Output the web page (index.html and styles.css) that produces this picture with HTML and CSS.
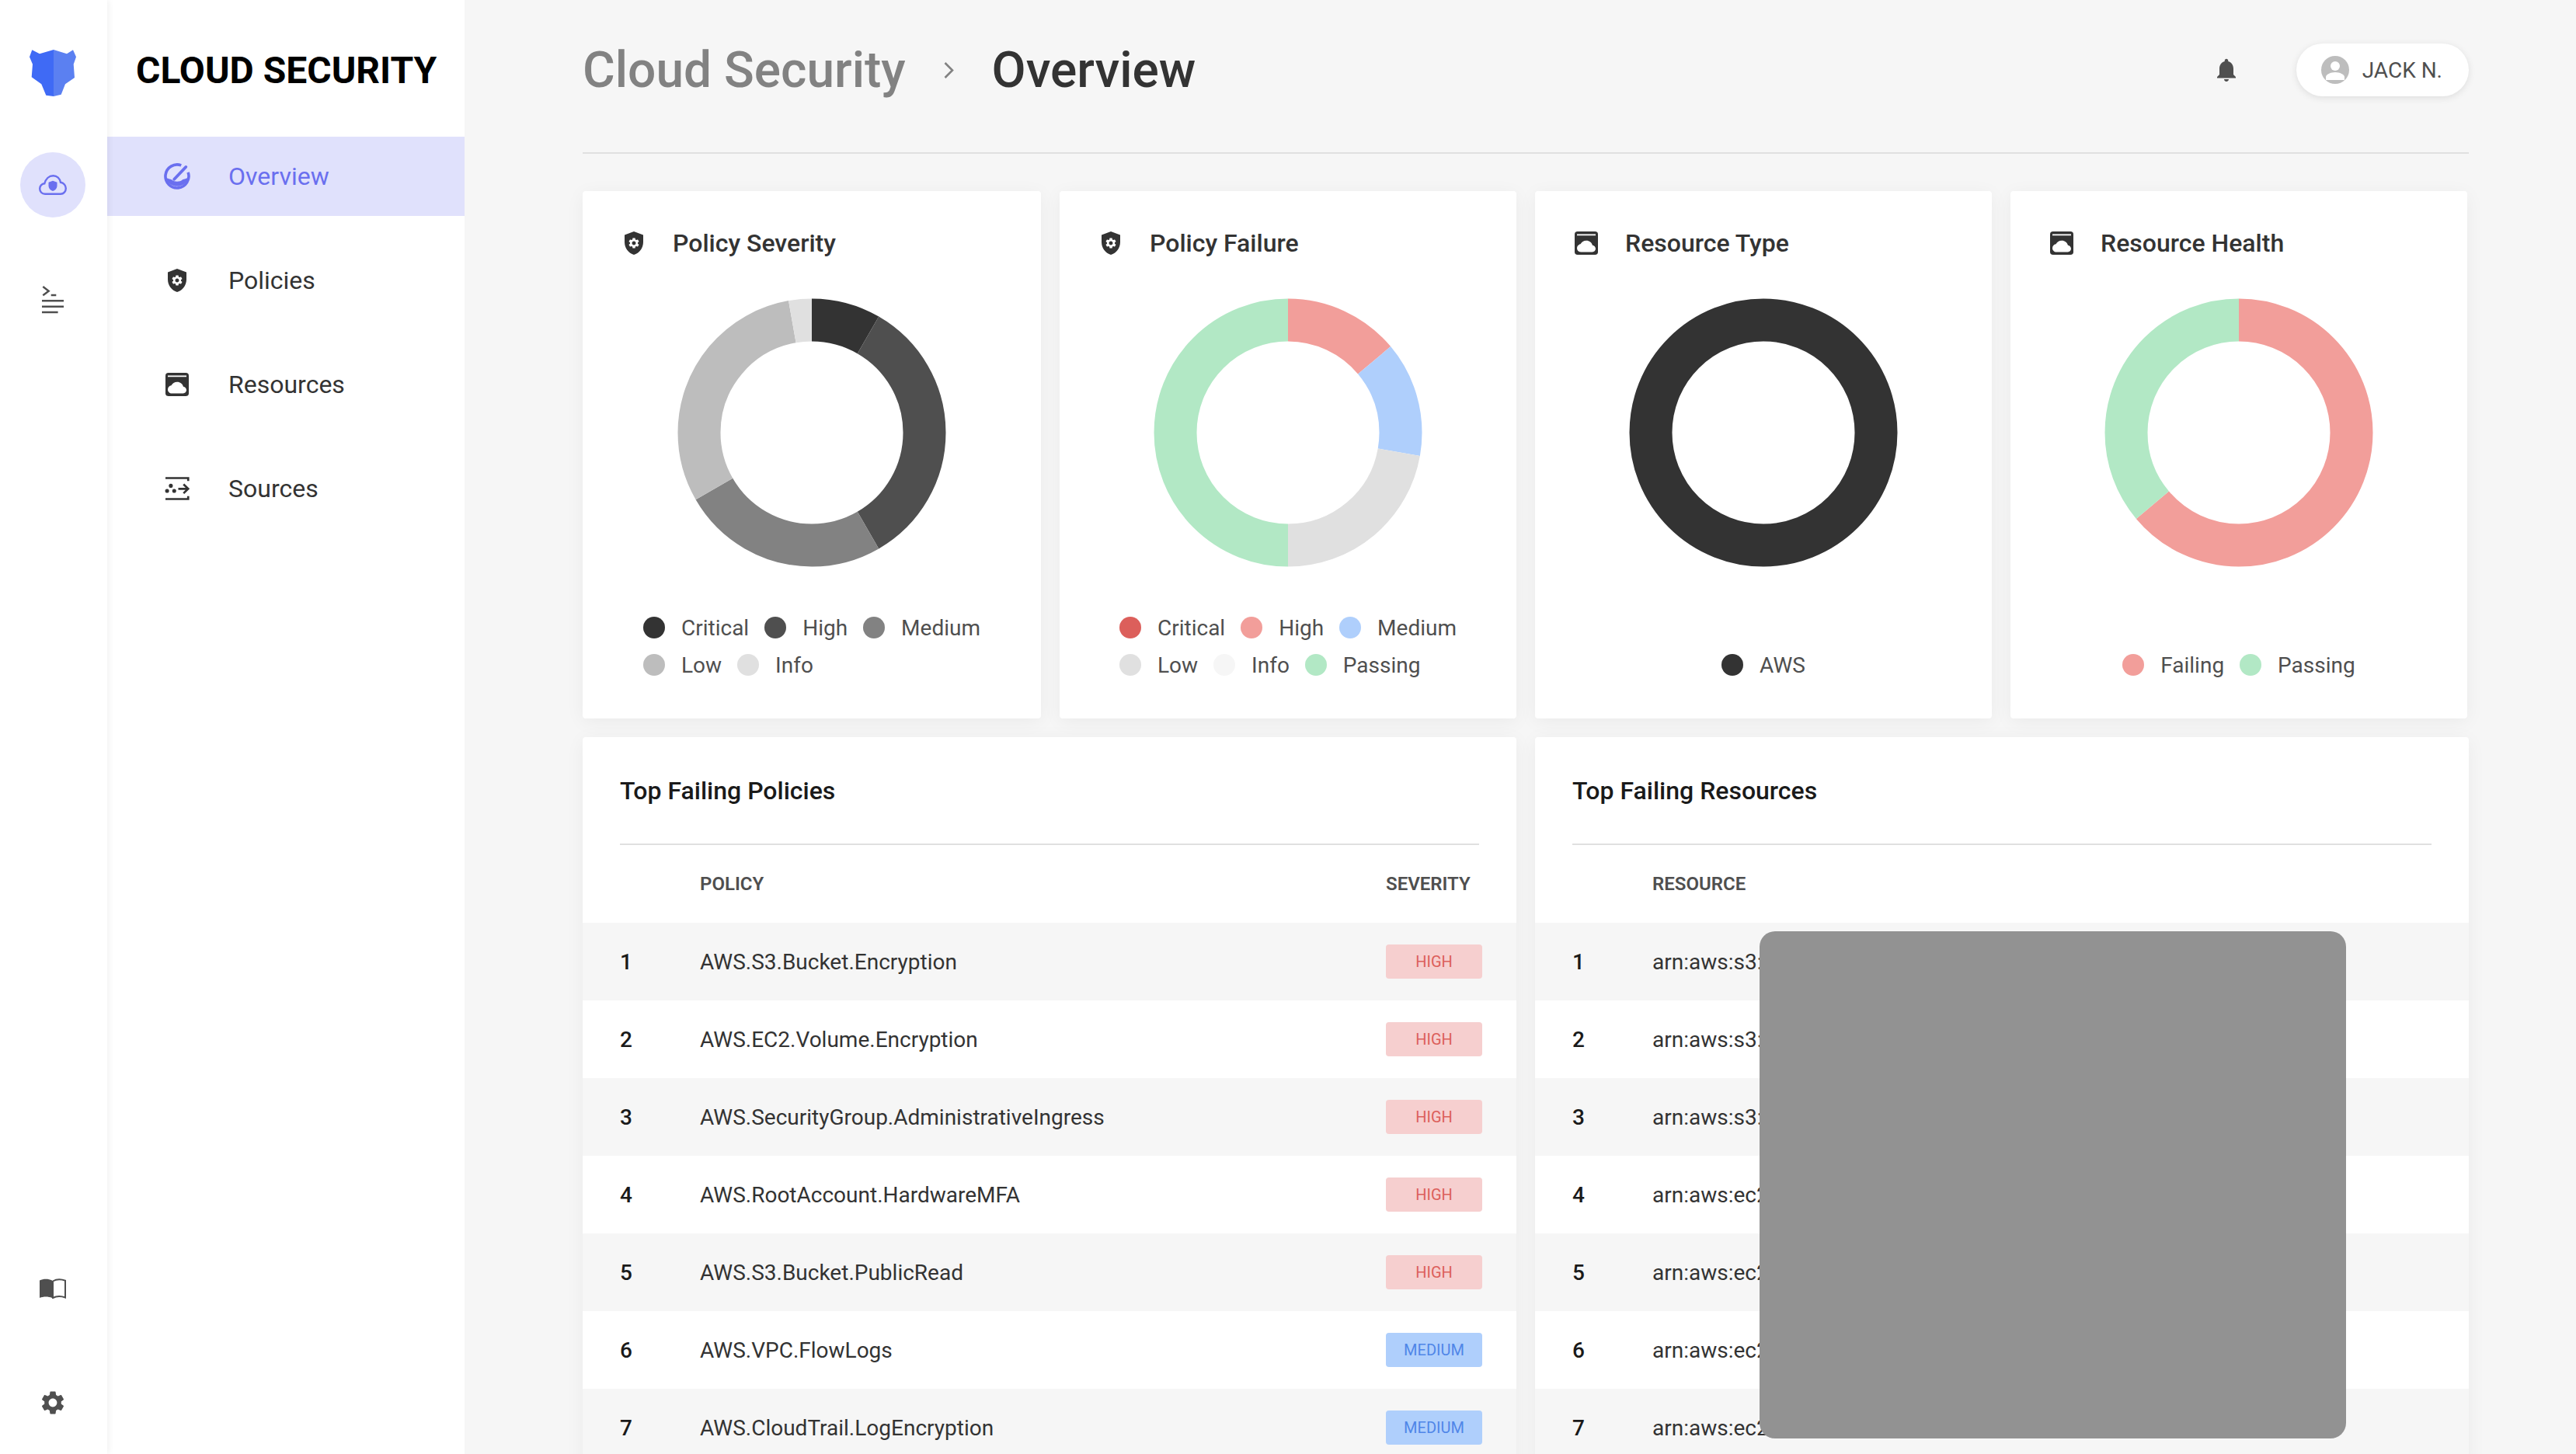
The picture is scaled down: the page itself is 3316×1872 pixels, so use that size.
FILE: index.html
```html
<!DOCTYPE html>
<html lang="en">
<head>
    <meta charset="UTF-8">
    <title>Cloud Security - Overview</title>
    <link rel="stylesheet" href="styles.css">
</head>
<body>

    <!-- Shared icons -->
    <svg class="icon-defs" aria-hidden="true">
        <symbol id="icon-policy" viewBox="0 0 24 24">
            <path fill="currentColor" d="M12 2l8 3v6.2c0 5-3.4 9.5-8 10.8-4.6-1.3-8-5.8-8-10.8V5z"/>
            <path fill="#fff" transform="translate(12 12) scale(.46) translate(-12 -12)" d="M19.14 12.94c.04-.3.06-.61.06-.94 0-.32-.02-.64-.07-.94l2.03-1.58c.18-.14.23-.41.12-.61l-1.92-3.32c-.12-.22-.37-.29-.59-.22l-2.39.96c-.5-.38-1.03-.7-1.62-.94l-.36-2.54c-.04-.24-.24-.41-.48-.41h-3.84c-.24 0-.43.17-.47.41l-.36 2.54c-.59.24-1.13.57-1.62.94l-2.39-.96c-.22-.08-.47 0-.59.22L2.74 8.87c-.12.21-.08.47.12.61l2.03 1.58c-.05.3-.09.63-.09.94s.02.64.07.94l-2.03 1.58c-.18.14-.23.41-.12.61l1.92 3.32c.12.22.37.29.59.22l2.39-.96c.5.38 1.03.7 1.62.94l.36 2.54c.05.24.24.41.48.41h3.84c.24 0 .44-.17.47-.41l.36-2.54c.59-.24 1.13-.56 1.62-.94l2.39.96c.22.08.47 0 .59-.22l1.92-3.32c.12-.22.07-.47-.12-.61l-2.01-1.58zM12 15.6c-1.98 0-3.6-1.62-3.6-3.6s1.62-3.6 3.6-3.6 3.6 1.62 3.6 3.6-1.62 3.6-3.6 3.6z"/>
        </symbol>
        <symbol id="icon-resource" viewBox="0 0 24 24">
            <rect x="2" y="2" width="20" height="20" rx="2.5" fill="currentColor"/>
            <rect x="4" y="4.3" width="16" height="1.2" fill="#fff"/>
            <path fill="#fff" d="M7.5 19.7c-2 0-3.5-1.5-3.5-3.4 0-1.8 1.3-3.2 3-3.4.9-1.8 2.8-3 5-3 2.6 0 4.7 1.7 5.3 4 1.5.2 2.7 1.5 2.7 3 0 1.5-1.3 2.8-2.8 2.8z"/>
        </symbol>
    </svg>

    <div class="app">

        <!-- Icon rail -->
        <aside class="rail">
            <svg class="rail-logo" viewBox="0 0 60 60">
                <path fill="#3f6af5" d="M31 0L13 5.3 3.3.3 0 9.3l4 9.4-1.3 16.6 12.6 9 6 14.4L31 60z"/>
                <path fill="#5b80f1" d="M31 0l17 5.3L56 .3l4 9-3.3 9.4L58 36l-12 8.3-5.3 13.4L31 60z"/>
            </svg>
            <div class="rail-active">
                <svg width="36" height="26" viewBox="0 0 36 26">
                    <path fill="none" stroke="currentColor" stroke-width="2.4" d="M8 24.8C3.8 24.8 1.2 21.5 1.200 18 1.200 14.500 3.800 11.500 7.300 11.300 8.800 5.500 13 1.200 18.500 1.200 23.500 1.200 27 4.800 28 9.800 32 10.300 34.800 13.800 34.800 17.500 34.800 21.500 32 24.800 28 24.800z"/>
                    <path fill="currentColor" d="M18 7.7l5.500 2v4.500c0 3.200-2.300 5.600-5.500 6.800-3.200-1.200-5.500-3.600-5.500-6.800V9.700z"/>
                </svg>
            </div>
            <svg class="rail-terminal" width="28" height="36" viewBox="0 0 28 36">
                <path fill="none" stroke="#4f4f4f" stroke-width="2.4" d="M1.300 1l7.400 5.700-7.400 5.600"/>
                <path fill="none" stroke="#4f4f4f" stroke-width="2.4" d="M11.700 12h6.600M0 19.300h28M0 26.700h28M0 34h20.600"/>
            </svg>
            <div class="rail-bottom">
                <svg width="34" height="26" viewBox="0 0 34 26">
                    <path fill="#4f4f4f" d="M0 2.500C5 .3 11 .3 16 2.500V25c-5-2-11-2-16 0z"/>
                    <path fill="none" stroke="#4f4f4f" stroke-width="2" d="M17 3.500C21.500 1 28 1 33 2.800V24.500c-5-1.800-11.500-1.800-16 .5z"/>
                </svg>
                <svg width="36" height="36" viewBox="0 0 24 24">
                    <path fill="#4f4f4f" d="M19.14 12.94c.04-.3.06-.61.06-.94 0-.32-.02-.64-.07-.94l2.03-1.58c.18-.14.23-.41.12-.61l-1.92-3.32c-.12-.22-.37-.29-.59-.22l-2.39.96c-.5-.38-1.03-.7-1.62-.94l-.36-2.54c-.04-.24-.24-.41-.48-.41h-3.84c-.24 0-.43.17-.47.41l-.36 2.54c-.59.24-1.13.57-1.62.94l-2.39-.96c-.22-.08-.47 0-.59.22L2.74 8.87c-.12.21-.08.47.12.61l2.03 1.58c-.05.3-.09.63-.09.94s.02.64.07.94l-2.03 1.58c-.18.14-.23.41-.12.61l1.92 3.32c.12.22.37.29.59.22l2.39-.96c.5.38 1.03.7 1.62.94l.36 2.54c.05.24.24.41.48.41h3.84c.24 0 .44-.17.47-.41l.36-2.54c.59-.24 1.13-.56 1.62-.94l2.39.96c.22.08.47 0 .59-.22l1.92-3.32c.12-.22.07-.47-.12-.61l-2.01-1.58zM12 15.6c-1.98 0-3.6-1.62-3.6-3.6s1.62-3.6 3.6-3.6 3.6 1.62 3.6 3.6-1.62 3.6-3.6 3.6z"/>
                </svg>
            </div>
        </aside>

        <!-- Section nav -->
        <nav class="sidebar">
            <div class="sidebar-title">CLOUD SECURITY</div>
            <a class="nav-item active" href="#">
                <svg class="icon" viewBox="0 0 24 24">
                    <path fill="none" stroke="currentColor" stroke-width="2.4" d="M15.500 2.600A10 10 0 1 0 21.400 8.600"/>
                    <path fill="currentColor" d="M2.200 12.500c1.700 2 3.800 1.500 5.300 2.500 2 2 7 2 9 0 1.500-1 3.500-.5 5.300-2.500A10 10 0 0 1 2.200 12.500z"/>
                    <path fill="none" stroke="currentColor" stroke-width="2.6" stroke-linecap="round" d="M9.500 14.500L19.500 4"/>
                </svg>
                Overview
            </a>
            <a class="nav-item" href="#">
                <svg class="icon"><use href="#icon-policy"/></svg>
                Policies
            </a>
            <a class="nav-item" href="#">
                <svg class="icon"><use href="#icon-resource"/></svg>
                Resources
            </a>
            <a class="nav-item" href="#">
                <svg class="icon" viewBox="0 0 24 24">
                    <path fill="none" stroke="currentColor" stroke-width="1.8" d="M2 3h19.500v2.500M2 21h19.500v-2.500"/>
                    <circle cx="3.400" cy="14" r="1.700" fill="currentColor"/>
                    <circle cx="6.600" cy="9.600" r="1.700" fill="currentColor"/>
                    <circle cx="9.500" cy="14" r="1.700" fill="currentColor"/>
                    <path fill="none" stroke="currentColor" stroke-width="1.8" d="M13 12.200h8M17.500 8.300l4 3.900-4 3.900"/>
                </svg>
                Sources
            </a>
        </nav>

        <main class="main">
            <header class="topbar">
                <div class="crumbs">
                    <span class="crumb-parent">Cloud Security</span>
                    <svg class="crumb-sep" width="15" height="23" viewBox="0 0 15 23">
                        <path fill="none" stroke="#828282" stroke-width="2.6" d="M2.500 2l9.500 9.500L2.500 21"/>
                    </svg>
                    <span class="crumb-current">Overview</span>
                </div>
                <div class="topbar-right">
                    <svg class="icon bell" viewBox="0 0 24 24">
                        <path fill="currentColor" d="M12 22c1.100 0 2-.9 2-2h-4c0 1.100.89 2 2 2zm6-6v-5c0-3.070-1.640-5.640-4.500-6.320V4c0-.83-.67-1.500-1.500-1.500s-1.500.67-1.500 1.500v.68C7.630 5.360 6 7.920 6 11v5l-2 2v1h16v-1l-2-2z"/>
                    </svg>
                    <div class="user-pill">
                        <svg width="36" height="36" viewBox="0 0 36 36">
                            <circle cx="18" cy="18" r="18" fill="#bdbdbd"/>
                            <circle cx="18" cy="13" r="6" fill="#fff"/>
                            <path fill="#fff" d="M6 31v-4c0-3 6-6 12-6s12 3 12 6v4z"/>
                        </svg>
                        JACK N.
                    </div>
                </div>
            </header>

            <div class="chart-row">

                <section class="card chart-card">
                    <h2 class="card-title"><svg class="icon"><use href="#icon-policy"/></svg>Policy Severity</h2>
                    <svg class="donut" viewBox="0 0 346 346">
                        <g fill="none" stroke-width="55" transform="rotate(-90 173 173)">
                            <circle cx="173" cy="173" r="145" pathLength="360" stroke="#333333" stroke-dasharray="30 330"/>
                            <circle cx="173" cy="173" r="145" pathLength="360" stroke="#4f4f4f" stroke-dasharray="120 240" stroke-dashoffset="-30"/>
                            <circle cx="173" cy="173" r="145" pathLength="360" stroke="#828282" stroke-dasharray="90 270" stroke-dashoffset="-150"/>
                            <circle cx="173" cy="173" r="145" pathLength="360" stroke="#bdbdbd" stroke-dasharray="110 250" stroke-dashoffset="-240"/>
                            <circle cx="173" cy="173" r="145" pathLength="360" stroke="#e0e0e0" stroke-dasharray="10 350" stroke-dashoffset="-350"/>
                        </g>
                    </svg>
                    <div class="legend">
                        <div class="legend-row">
                            <span class="legend-item"><i class="dot c-333"></i>Critical</span>
                            <span class="legend-item"><i class="dot c-4f4"></i>High</span>
                            <span class="legend-item"><i class="dot c-828"></i>Medium</span>
                        </div>
                        <div class="legend-row">
                            <span class="legend-item"><i class="dot c-bdb"></i>Low</span>
                            <span class="legend-item"><i class="dot c-e0e"></i>Info</span>
                        </div>
                    </div>
                </section>

                <section class="card chart-card">
                    <h2 class="card-title"><svg class="icon"><use href="#icon-policy"/></svg>Policy Failure</h2>
                    <svg class="donut" viewBox="0 0 346 346">
                        <g fill="none" stroke-width="55" transform="rotate(-90 173 173)">
                            <circle cx="173" cy="173" r="145" pathLength="360" stroke="#f29e9a" stroke-dasharray="50 310"/>
                            <circle cx="173" cy="173" r="145" pathLength="360" stroke="#afcffc" stroke-dasharray="50 310" stroke-dashoffset="-50"/>
                            <circle cx="173" cy="173" r="145" pathLength="360" stroke="#e0e0e0" stroke-dasharray="80 280" stroke-dashoffset="-100"/>
                            <circle cx="173" cy="173" r="145" pathLength="360" stroke="#b2e8c5" stroke-dasharray="180 180" stroke-dashoffset="-180"/>
                        </g>
                    </svg>
                    <div class="legend">
                        <div class="legend-row">
                            <span class="legend-item"><i class="dot c-red"></i>Critical</span>
                            <span class="legend-item"><i class="dot c-pink"></i>High</span>
                            <span class="legend-item"><i class="dot c-blue"></i>Medium</span>
                        </div>
                        <div class="legend-row">
                            <span class="legend-item"><i class="dot c-e0e"></i>Low</span>
                            <span class="legend-item"><i class="dot c-f6f"></i>Info</span>
                            <span class="legend-item"><i class="dot c-green"></i>Passing</span>
                        </div>
                    </div>
                </section>

                <section class="card chart-card">
                    <h2 class="card-title"><svg class="icon"><use href="#icon-resource"/></svg>Resource Type</h2>
                    <svg class="donut" viewBox="0 0 346 346">
                        <circle cx="173" cy="173" r="145" fill="none" stroke-width="55" stroke="#333333"/>
                    </svg>
                    <div class="legend">
                        <div class="legend-row">
                            <span class="legend-item"><i class="dot c-333"></i>AWS</span>
                        </div>
                    </div>
                </section>

                <section class="card chart-card">
                    <h2 class="card-title"><svg class="icon"><use href="#icon-resource"/></svg>Resource Health</h2>
                    <svg class="donut" viewBox="0 0 346 346">
                        <g fill="none" stroke-width="55" transform="rotate(-90 173 173)">
                            <circle cx="173" cy="173" r="145" pathLength="360" stroke="#f29e9a" stroke-dasharray="230 130"/>
                            <circle cx="173" cy="173" r="145" pathLength="360" stroke="#b2e8c5" stroke-dasharray="130 230" stroke-dashoffset="-230"/>
                        </g>
                    </svg>
                    <div class="legend">
                        <div class="legend-row">
                            <span class="legend-item"><i class="dot c-pink"></i>Failing</span>
                            <span class="legend-item"><i class="dot c-green"></i>Passing</span>
                        </div>
                    </div>
                </section>
            </div>

            <div class="table-row">
                <section class="card">
                    <h2 class="table-title">Top Failing Policies</h2>
                    <table class="table">
                        <thead>
                            <tr><th class="col-num"></th><th>POLICY</th><th class="col-sev">SEVERITY</th></tr>
                        </thead>
                        <tbody>
                            <tr><td class="col-num">1</td><td>AWS.S3.Bucket.Encryption</td><td class="col-sev"><span class="badge high">HIGH</span></td></tr>
                            <tr><td class="col-num">2</td><td>AWS.EC2.Volume.Encryption</td><td class="col-sev"><span class="badge high">HIGH</span></td></tr>
                            <tr><td class="col-num">3</td><td>AWS.SecurityGroup.AdministrativeIngress</td><td class="col-sev"><span class="badge high">HIGH</span></td></tr>
                            <tr><td class="col-num">4</td><td>AWS.RootAccount.HardwareMFA</td><td class="col-sev"><span class="badge high">HIGH</span></td></tr>
                            <tr><td class="col-num">5</td><td>AWS.S3.Bucket.PublicRead</td><td class="col-sev"><span class="badge high">HIGH</span></td></tr>
                            <tr><td class="col-num">6</td><td>AWS.VPC.FlowLogs</td><td class="col-sev"><span class="badge medium">MEDIUM</span></td></tr>
                            <tr><td class="col-num">7</td><td>AWS.CloudTrail.LogEncryption</td><td class="col-sev"><span class="badge medium">MEDIUM</span></td></tr>
                        </tbody>
                    </table>
                </section>

                <section class="card">
                    <h2 class="table-title">Top Failing Resources</h2>
                    <table class="table">
                        <thead>
                            <tr><th class="col-num"></th><th>RESOURCE</th></tr>
                        </thead>
                        <tbody>
                            <tr><td class="col-num">1</td><td>arn:aws:s3:::</td></tr>
                            <tr><td class="col-num">2</td><td>arn:aws:s3:::</td></tr>
                            <tr><td class="col-num">3</td><td>arn:aws:s3:::</td></tr>
                            <tr><td class="col-num">4</td><td>arn:aws:ec2:</td></tr>
                            <tr><td class="col-num">5</td><td>arn:aws:ec2:</td></tr>
                            <tr><td class="col-num">6</td><td>arn:aws:ec2:</td></tr>
                            <tr><td class="col-num">7</td><td>arn:aws:ec2:</td></tr>
                        </tbody>
                    </table>
                    <!-- Redacted block over the resource names -->
                    <div class="redacted"></div>
                </section>
            </div>
        </main>
    </div>

</body>
</html>
```

FILE: styles.css
```css
html, body {
    margin: 0;
    padding: 0;
    height: 100%;
    overflow: hidden;
    font-family: Roboto, "Liberation Sans", sans-serif;
    background-color: #f6f6f6;
    color: #333333;
}

.icon-defs {
    display: none;
}

.icon {
    width: 36px;
    height: 36px;
    flex-shrink: 0;
}

.app {
    display: flex;
    height: 100vh;
}

/* Icon rail */
.rail {
    width: 138px;
    flex-shrink: 0;
    box-sizing: border-box;
    padding: 64px 2px 0 0;
    display: flex;
    flex-direction: column;
    align-items: center;
    background-color: white;
    box-shadow: 2px 0 8px rgba(0, 0, 0, 0.06);
    z-index: 2;
}

.rail-logo {
    width: 60px;
    height: 60px;
}

.rail-active {
    width: 84px;
    height: 84px;
    margin-top: 72px;
    border-radius: 50%;
    background-color: #e0e1fc;
    color: #6a6fef;
    display: flex;
    align-items: center;
    justify-content: center;
}

.rail-terminal {
    margin-top: 88px;
}

.rail-bottom {
    margin-top: auto;
    padding-bottom: 48px;
    display: flex;
    flex-direction: column;
    align-items: center;
    gap: 116px;
}

/* Section nav */
.sidebar {
    width: 460px;
    flex-shrink: 0;
    background-color: white;
    display: flex;
    flex-direction: column;
    gap: 32px;
}

.sidebar-title {
    height: 144px;
    box-sizing: border-box;
    padding: 36px 0 0 37px;
    display: flex;
    align-items: center;
    font-size: 48px;
    font-weight: 700;
    color: #000;
}

.nav-item {
    height: 102px;
    padding-left: 72px;
    display: flex;
    align-items: center;
    gap: 48px;
    font-size: 32px;
    color: #333333;
    text-decoration: none;
}

.nav-item.active {
    background-color: #e0e1fc;
    color: #6a6fef;
}

/* Main area */
.main {
    flex: 1;
    min-width: 0;
    padding: 0 138px 0 152px;
    overflow: hidden;
}

.topbar {
    height: 180px;
    padding-bottom: 16px;
    border-bottom: 2px solid #e0e0e0;
    margin-bottom: 48px;
    display: flex;
    align-items: center;
    justify-content: space-between;
}

.crumbs {
    display: flex;
    align-items: center;
    font-size: 64px;
    font-weight: 500;
}

.crumb-parent {
    color: #828282;
}

.crumb-sep {
    margin: 0 48px 0 48px;
}

.crumb-current {
    color: #333333;
}

.topbar-right {
    display: flex;
    align-items: center;
    gap: 72px;
}

.bell {
    color: #4f4f4f;
}

.user-pill {
    height: 68px;
    box-sizing: border-box;
    padding: 0 34px 0 32px;
    display: flex;
    align-items: center;
    gap: 17px;
    background-color: white;
    border-radius: 34px;
    box-shadow: 0 2px 10px rgba(0, 0, 0, 0.1);
    font-size: 28px;
    color: #4f4f4f;
}

.chart-row {
    display: grid;
    grid-template-columns: 590px 588px 588px 588px;
    gap: 24px;
    margin-bottom: 24px;
}

.table-row {
    display: grid;
    grid-template-columns: 1fr 1fr;
    gap: 24px;
}

.card {
    position: relative;
    background-color: white;
    border-radius: 4px;
    box-shadow: 0 4px 24px rgba(0, 0, 0, 0.05);
}

.chart-card {
    box-sizing: border-box;
    height: 679px;
    padding: 48px 48px 55px;
    display: flex;
    flex-direction: column;
}

.card-title {
    margin: 0;
    display: flex;
    align-items: center;
    gap: 32px;
    font-size: 32px;
    font-weight: 500;
    color: #333333;
}

.donut {
    width: 346px;
    height: 346px;
    margin: 52px auto 0;
    display: block;
}

.legend {
    margin: auto auto 0;
    display: flex;
    flex-direction: column;
    gap: 20px;
}

.legend-row {
    display: flex;
    gap: 20px;
}

.legend-item {
    display: flex;
    align-items: center;
    height: 28px;
    font-size: 28px;
    color: #4f4f4f;
}

.dot {
    width: 28px;
    height: 28px;
    margin-right: 21px;
    border-radius: 50%;
}

.c-333 { background-color: #333333; }
.c-4f4 { background-color: #4f4f4f; }
.c-828 { background-color: #828282; }
.c-bdb { background-color: #bdbdbd; }
.c-e0e { background-color: #e0e0e0; }
.c-f6f { background-color: #f6f6f6; }
.c-red { background-color: #dc5f5b; }
.c-pink { background-color: #f29e9a; }
.c-blue { background-color: #afcffc; }
.c-green { background-color: #b2e8c5; }

/* Tables */
.table-title {
    height: 139px;
    box-sizing: border-box;
    margin: 0 48px;
    display: flex;
    align-items: center;
    border-bottom: 2px solid #e0e0e0;
    font-size: 32px;
    font-weight: 500;
    color: #1a1a1a;
}

.table {
    width: 100%;
    border-collapse: collapse;
    table-layout: fixed;
}

.table th {
    height: 100px;
    padding: 0;
    text-align: left;
    font-size: 24px;
    font-weight: 600;
    color: #4f4f4f;
}

.table td {
    height: 100px;
    padding: 0;
    font-size: 28px;
    color: #333333;
    white-space: nowrap;
}

.table tbody tr:nth-child(odd) {
    background-color: #f6f6f6;
}

.table .col-num {
    width: 103px;
    padding-left: 48px;
    font-weight: 500;
    color: #1a1a1a;
}

.table .col-sev {
    width: 168px;
}

.badge {
    width: 124px;
    height: 44px;
    display: flex;
    align-items: center;
    justify-content: center;
    border-radius: 4px;
    font-size: 20px;
}

.badge.high {
    background-color: #f6cfcf;
    color: #dc5f5b;
}

.badge.medium {
    background-color: #afcffc;
    color: #4f86e8;
}

.redacted {
    position: absolute;
    left: 289px;
    top: 250px;
    width: 755px;
    height: 653px;
    border-radius: 20px;
    background-color: #929292;
}
```
